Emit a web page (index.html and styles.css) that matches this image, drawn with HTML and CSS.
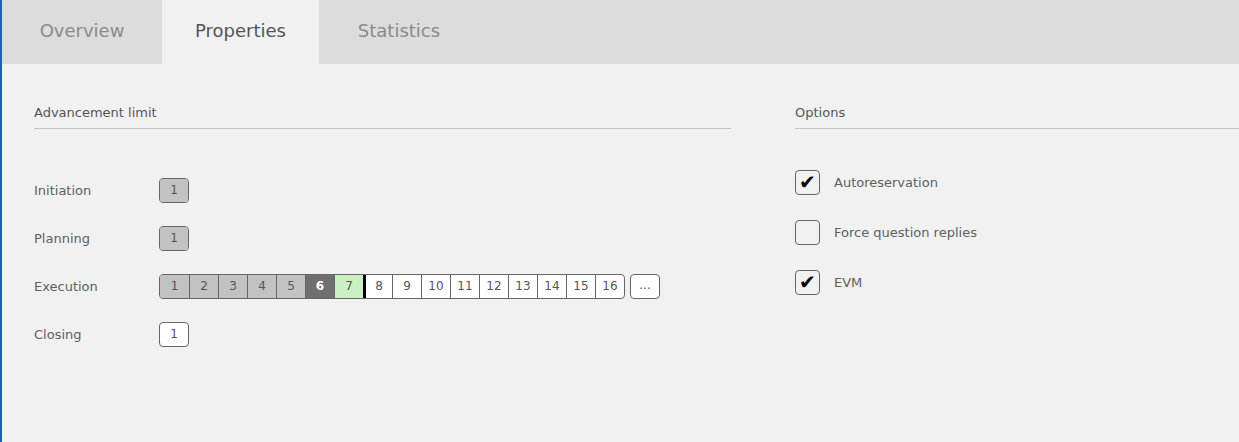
FILE: index.html
```html
<!DOCTYPE html>
<html lang="en">
<head>
  <meta charset="UTF-8">
  <title>Project properties</title>
  <link rel="stylesheet" href="styles.css">
</head>
<body>
  <nav class="tabs">
    <a class="tab">Overview</a>
    <a class="tab active">Properties</a>
    <a class="tab">Statistics</a>
  </nav>

  <div class="content">
    <section class="panel limits">
      <h2 class="panel-title">Advancement limit</h2>
      <div class="phase-list">
        <div class="phase">
          <span class="phase-name">Initiation</span>
          <div class="steps">
            <span class="step done">1</span>
          </div>
        </div>
        <div class="phase">
          <span class="phase-name">Planning</span>
          <div class="steps">
            <span class="step done">1</span>
          </div>
        </div>
        <div class="phase">
          <span class="phase-name">Execution</span>
          <div class="steps">
            <span class="step done">1</span>
            <span class="step done">2</span>
            <span class="step done">3</span>
            <span class="step done">4</span>
            <span class="step done">5</span>
            <span class="step current">6</span>
            <span class="step next">7</span>
            <span class="step limit">8</span>
            <span class="step">9</span>
            <span class="step">10</span>
            <span class="step">11</span>
            <span class="step">12</span>
            <span class="step">13</span>
            <span class="step">14</span>
            <span class="step">15</span>
            <span class="step">16</span>
          </div>
          <span class="step more">...</span>
        </div>
        <div class="phase">
          <span class="phase-name">Closing</span>
          <div class="steps">
            <span class="step">1</span>
          </div>
        </div>
      </div>
    </section>

    <section class="panel options">
      <h2 class="panel-title">Options</h2>
      <div class="option-list">
        <label class="option"><span class="checkbox checked">&#10004;</span>Autoreservation</label>
        <label class="option"><span class="checkbox"></span>Force question replies</label>
        <label class="option"><span class="checkbox checked">&#10004;</span>EVM</label>
      </div>
    </section>
  </div>
</body>
</html>
```

FILE: styles.css
```css
body {
  margin: 0;
  min-height: 442px;
  background-color: #f1f1f1;
  border-left: 2px solid #1d62ad;
  font-family: "DejaVu Sans", Verdana, sans-serif;
  color: #5a5a5a;
  overflow: hidden;
}

.tabs {
  display: flex;
  height: 64px;
  background-color: #dcdcdc;
}

.tab {
  width: 160px;
  line-height: 62px;
  text-align: center;
  font-size: 18px;
  color: #8a8a8a;
}

.tab.active {
  width: 157px;
  background-color: #f1f1f1;
  color: #555;
}

.content {
  display: flex;
  gap: 64px;
  padding: 41px 0 0 32px;
}

.limits {
  width: 697px;
  flex-shrink: 0;
}

.options {
  flex: 1;
}

.panel-title {
  margin: 0;
  padding-bottom: 7px;
  border-bottom: 1px solid #c2c2c2;
  font-size: 13px;
  font-weight: normal;
  line-height: 16px;
  color: #555;
}

.phase-list {
  padding-top: 37px;
}

.phase {
  display: flex;
  align-items: center;
  height: 48px;
  font-size: 13px;
}

.phase-name {
  width: 125px;
  color: #5f5f5f;
}

.steps {
  display: flex;
  border: 1px solid #666;
  border-radius: 4px;
  overflow: hidden;
  background-color: #fff;
}

.step {
  box-sizing: border-box;
  width: 29px;
  height: 23px;
  line-height: 23px;
  text-align: center;
  font-size: 12px;
  color: #555;
  border-left: 1px solid #666;
}

.step:first-child {
  border-left: none;
}

.step:only-child {
  width: 28px;
}

.step.done {
  background-color: #c2c2c2;
}

.step.current {
  background-color: #6f6f6f;
  color: #fff;
  font-weight: bold;
}

.step.next {
  background-color: #ccf0c1;
}

.step.limit {
  border-left: 3px solid #000;
}

.step.more {
  width: 30px;
  height: 25px;
  margin-left: 5px;
  border: 1px solid #666;
  border-radius: 4px;
  background-color: #fff;
  line-height: 21px;
}

.option-list {
  padding-top: 28px;
}

.option {
  display: flex;
  align-items: center;
  height: 50px;
  font-size: 13px;
  color: #5f5f5f;
}

.checkbox {
  box-sizing: border-box;
  width: 25px;
  height: 25px;
  margin-right: 14px;
  border: 1px solid #666;
  border-radius: 4px;
  text-align: center;
  line-height: 23px;
  font-size: 20px;
  font-weight: bold;
  color: #000;
}
```
